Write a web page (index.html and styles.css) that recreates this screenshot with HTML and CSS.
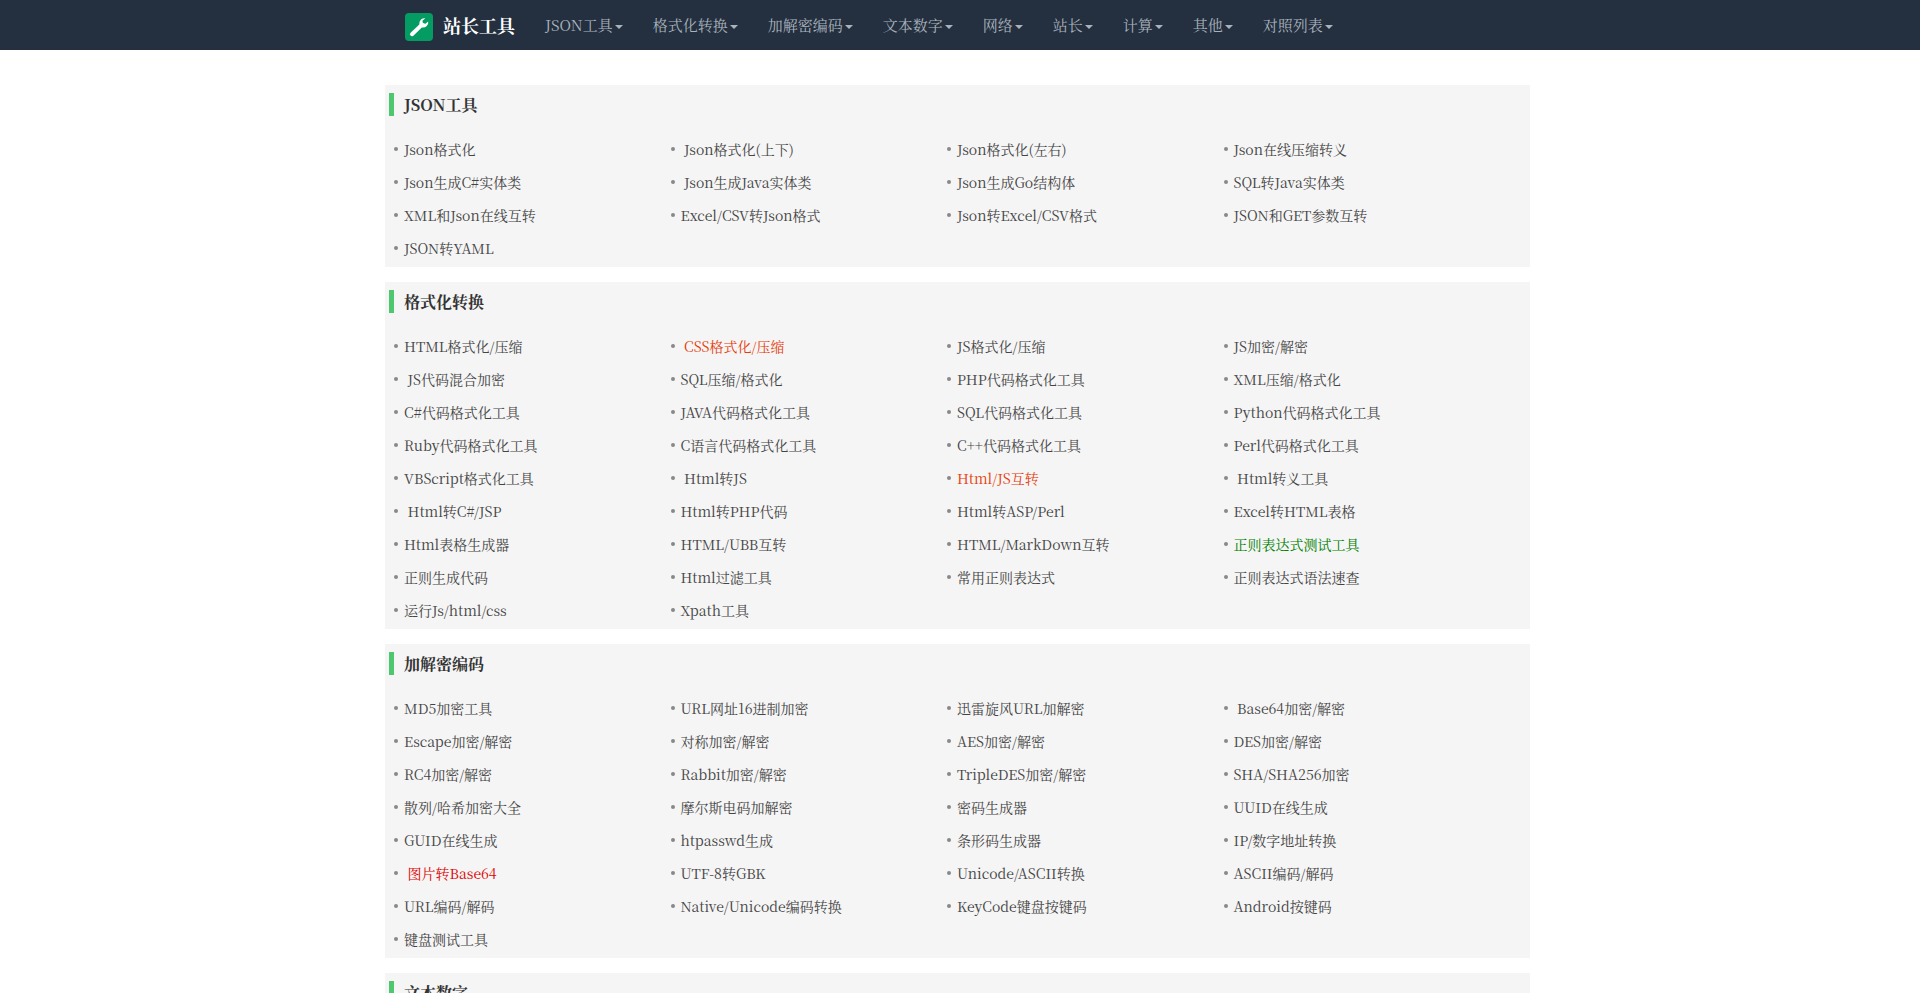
FILE: index.html
```html
<!DOCTYPE html>
<html lang="zh-CN">
<head>
  <meta charset="utf-8">
  <meta name="viewport" content="width=device-width, initial-scale=1">
  <title>站长工具</title>
  <link rel="stylesheet" href="styles.css">
</head>
<body>
<nav class="navbar">
  <div class="container nav-inner">
    <a class="brand" href="#">
      <svg class="logo" viewBox="0 0 28 28" aria-hidden="true">
        <rect width="28" height="28" rx="4" fill="#049c63"/>
        <path d="M7 21.2 L17 11.6" stroke="#fff" stroke-width="4" stroke-linecap="round"/>
        <path d="M20.4 5.2 a5.2 5.2 0 0 0 -5.8 6.6 l2.6 2.6 a5.2 5.2 0 0 0 6 -6 l-2.8 2.4 l-2.5 -.6 l-.5 -2.4 z" fill="#fff"/>
      </svg>
      <span>站长工具</span>
    </a>
    <ul class="menu">
      <li><a href="#">JSON工具<b class="caret"></b></a></li>
      <li><a href="#">格式化转换<b class="caret"></b></a></li>
      <li><a href="#">加解密编码<b class="caret"></b></a></li>
      <li><a href="#">文本数字<b class="caret"></b></a></li>
      <li><a href="#">网络<b class="caret"></b></a></li>
      <li><a href="#">站长<b class="caret"></b></a></li>
      <li><a href="#">计算<b class="caret"></b></a></li>
      <li><a href="#">其他<b class="caret"></b></a></li>
      <li><a href="#">对照列表<b class="caret"></b></a></li>
    </ul>
  </div>
</nav>

<main class="container content">
  <section class="panel">
    <h2>JSON工具</h2>
    <ul class="tools">
      <li><a href="#">Json格式化</a></li>
      <li>&nbsp;<a href="#">Json格式化(上下)</a></li>
      <li><a href="#">Json格式化(左右)</a></li>
      <li><a href="#">Json在线压缩转义</a></li>
      <li><a href="#">Json生成C#实体类</a></li>
      <li>&nbsp;<a href="#">Json生成Java实体类</a></li>
      <li><a href="#">Json生成Go结构体</a></li>
      <li><a href="#">SQL转Java实体类</a></li>
      <li><a href="#">XML和Json在线互转</a></li>
      <li><a href="#">Excel/CSV转Json格式</a></li>
      <li><a href="#">Json转Excel/CSV格式</a></li>
      <li><a href="#">JSON和GET参数互转</a></li>
      <li><a href="#">JSON转YAML</a></li>
    </ul>
  </section>

  <section class="panel">
    <h2>格式化转换</h2>
    <ul class="tools">
      <li><a href="#">HTML格式化/压缩</a></li>
      <li>&nbsp;<a class="orange" href="#">CSS格式化/压缩</a></li>
      <li><a href="#">JS格式化/压缩</a></li>
      <li><a href="#">JS加密/解密</a></li>
      <li>&nbsp;<a href="#">JS代码混合加密</a></li>
      <li><a href="#">SQL压缩/格式化</a></li>
      <li><a href="#">PHP代码格式化工具</a></li>
      <li><a href="#">XML压缩/格式化</a></li>
      <li><a href="#">C#代码格式化工具</a></li>
      <li><a href="#">JAVA代码格式化工具</a></li>
      <li><a href="#">SQL代码格式化工具</a></li>
      <li><a href="#">Python代码格式化工具</a></li>
      <li><a href="#">Ruby代码格式化工具</a></li>
      <li><a href="#">C语言代码格式化工具</a></li>
      <li><a href="#">C++代码格式化工具</a></li>
      <li><a href="#">Perl代码格式化工具</a></li>
      <li><a href="#">VBScript格式化工具</a></li>
      <li>&nbsp;<a href="#">Html转JS</a></li>
      <li><a class="orange" href="#">Html/JS互转</a></li>
      <li>&nbsp;<a href="#">Html转义工具</a></li>
      <li>&nbsp;<a href="#">Html转C#/JSP</a></li>
      <li><a href="#">Html转PHP代码</a></li>
      <li><a href="#">Html转ASP/Perl</a></li>
      <li><a href="#">Excel转HTML表格</a></li>
      <li><a href="#">Html表格生成器</a></li>
      <li><a href="#">HTML/UBB互转</a></li>
      <li><a href="#">HTML/MarkDown互转</a></li>
      <li><a class="green" href="#">正则表达式测试工具</a></li>
      <li><a href="#">正则生成代码</a></li>
      <li><a href="#">Html过滤工具</a></li>
      <li><a href="#">常用正则表达式</a></li>
      <li><a href="#">正则表达式语法速查</a></li>
      <li><a href="#">运行Js/html/css</a></li>
      <li><a href="#">Xpath工具</a></li>
    </ul>
  </section>

  <section class="panel">
    <h2>加解密编码</h2>
    <ul class="tools">
      <li><a href="#">MD5加密工具</a></li>
      <li><a href="#">URL网址16进制加密</a></li>
      <li><a href="#">迅雷旋风URL加解密</a></li>
      <li>&nbsp;<a href="#">Base64加密/解密</a></li>
      <li><a href="#">Escape加密/解密</a></li>
      <li><a href="#">对称加密/解密</a></li>
      <li><a href="#">AES加密/解密</a></li>
      <li><a href="#">DES加密/解密</a></li>
      <li><a href="#">RC4加密/解密</a></li>
      <li><a href="#">Rabbit加密/解密</a></li>
      <li><a href="#">TripleDES加密/解密</a></li>
      <li><a href="#">SHA/SHA256加密</a></li>
      <li><a href="#">散列/哈希加密大全</a></li>
      <li><a href="#">摩尔斯电码加解密</a></li>
      <li><a href="#">密码生成器</a></li>
      <li><a href="#">UUID在线生成</a></li>
      <li><a href="#">GUID在线生成</a></li>
      <li><a href="#">htpasswd生成</a></li>
      <li><a href="#">条形码生成器</a></li>
      <li><a href="#">IP/数字地址转换</a></li>
      <li>&nbsp;<a class="red" href="#">图片转Base64</a></li>
      <li><a href="#">UTF-8转GBK</a></li>
      <li><a href="#">Unicode/ASCII转换</a></li>
      <li><a href="#">ASCII编码/解码</a></li>
      <li><a href="#">URL编码/解码</a></li>
      <li><a href="#">Native/Unicode编码转换</a></li>
      <li><a href="#">KeyCode键盘按键码</a></li>
      <li><a href="#">Android按键码</a></li>
      <li><a href="#">键盘测试工具</a></li>
    </ul>
  </section>

  <section class="panel">
    <h2>文本数字</h2>
  </section>
</main>
</body>
</html>
```
FILE: styles.css
```css
* {
    box-sizing: border-box;
}

body {
    margin: 0;
    color: #333;
    background: #fff;
    font-family: "Noto Serif CJK SC", "Noto Serif SC", "Noto Sans CJK SC", serif;
    font-size: 14px;
    line-height: 20px;
}

ul {
    list-style: none;
    margin: 0;
    padding: 0;
}

a {
    color: #444;
    text-decoration: none;
}

a:hover {
    text-decoration: underline;
}

.container {
    max-width: 1170px;
    margin: 0 auto;
}

.navbar {
    background: #24303f;
}

.nav-inner {
    display: flex;
    min-height: 50px;
    padding: 0 15px;
}

.brand {
    display: flex;
    align-items: center;
    gap: 10px;
    padding: 4px 15px 0;
    color: #fff;
    font-size: 18px;
    font-weight: bold;
}

.brand span {
    margin-top: -4px;
}

.logo {
    width: 28px;
    height: 28px;
}

.menu {
    display: flex;
    flex-wrap: wrap;
}

.menu a {
    display: block;
    padding: 15px;
    color: #a9b3be;
    font-size: 15px;
}

.caret {
    display: inline-block;
    margin-left: 2px;
    vertical-align: middle;
    border-top: 4px solid;
    border-left: 4px solid transparent;
    border-right: 4px solid transparent;
}

.content {
    padding: 35px 15px 0 10px;
}

.panel {
    margin-bottom: 15px;
    padding: 8px 4px 3px;
    background: #f5f5f5;
}

.panel h2 {
    margin: 0 0 16px;
    padding-left: 10px;
    border-left: 5px solid #4dc86f;
    font-size: 16px;
    line-height: 23px;
}

.tools {
    display: grid;
    grid-template-columns: repeat(4, 1fr);
    padding-right: 31px;
}

.tools li {
    display: flex;
    align-items: center;
    height: 33px;
}

.tools li::before {
    content: "";
    flex: none;
    width: 4px;
    height: 4px;
    margin: 0 6px 0 5px;
    border-radius: 50%;
    background: #888;
}

.tools .orange {
    color: #e63c0a;
}

.tools .green {
    color: #008000;
}

.tools .red {
    color: #e00000;
}
```
